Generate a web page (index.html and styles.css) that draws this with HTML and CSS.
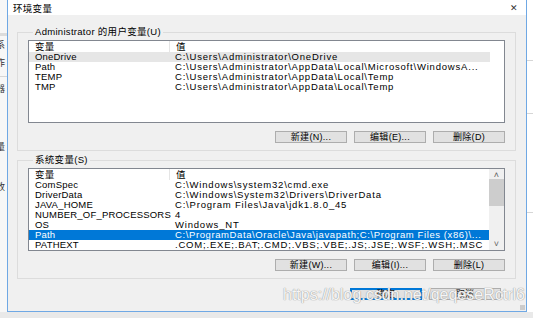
FILE: index.html
```
<!DOCTYPE html>
<html lang="zh-CN">
<head>
    <meta charset="UTF-8">
    <meta name="viewport" content="width=device-width, initial-scale=1.0">
    <title>环境变量</title>
    <link rel="stylesheet" href="styles.css">
</head>
<body>
    <div class="desk">
        <div class="side side-left">
            <div class="band"></div>
            <span class="peek p1">系</span>
            <span class="peek p2">作</span>
            <div class="line"></div>
            <span class="peek p3">器</span>
            <span class="peek p4">量</span>
            <span class="peek p5">改</span>
        </div>

        <div class="dialog">
            <div class="titlebar">
                <span class="title">环境变量</span>
                <span class="close">&#x2715;</span>
            </div>

            <div class="content">
                <fieldset class="group">
                    <legend>Administrator 的用户变量(U)</legend>
                    <div class="list">
                        <div class="row head"><span class="c1">变量</span><span class="c2">值</span></div>
                        <div class="row soft"><span class="c1">OneDrive</span><span class="c2">C:\Users\Administrator\OneDrive</span></div>
                        <div class="row"><span class="c1">Path</span><span class="c2">C:\Users\Administrator\AppData\Local\Microsoft\WindowsA...</span></div>
                        <div class="row"><span class="c1">TEMP</span><span class="c2">C:\Users\Administrator\AppData\Local\Temp</span></div>
                        <div class="row"><span class="c1">TMP</span><span class="c2">C:\Users\Administrator\AppData\Local\Temp</span></div>
                    </div>
                    <div class="btns">
                        <button class="btn">新建(N)...</button>
                        <button class="btn">编辑(E)...</button>
                        <button class="btn">删除(D)</button>
                    </div>
                </fieldset>

                <fieldset class="group">
                    <legend>系统变量(S)</legend>
                    <div class="list scrolled">
                        <div class="rows">
                            <div class="row head"><span class="c1">变量</span><span class="c2">值</span></div>
                            <div class="row"><span class="c1">ComSpec</span><span class="c2">C:\Windows\system32\cmd.exe</span></div>
                            <div class="row"><span class="c1">DriverData</span><span class="c2">C:\Windows\System32\Drivers\DriverData</span></div>
                            <div class="row"><span class="c1">JAVA_HOME</span><span class="c2">C:\Program Files\Java\jdk1.8.0_45</span></div>
                            <div class="row"><span class="c1">NUMBER_OF_PROCESSORS</span><span class="c2">4</span></div>
                            <div class="row"><span class="c1">OS</span><span class="c2">Windows_NT</span></div>
                            <div class="row sel"><span class="c1">Path</span><span class="c2 tight">C:\ProgramData\Oracle\Java\javapath;C:\Program Files (x86)\...</span></div>
                            <div class="row"><span class="c1">PATHEXT</span><span class="c2">.COM;.EXE;.BAT;.CMD;.VBS;.VBE;.JS;.JSE;.WSF;.WSH;.MSC</span></div>
                        </div>
                        <div class="scrollbar">
                            <span class="arrow">&#x2C4;</span>
                            <div class="thumb"></div>
                            <span class="arrow down">&#x2C5;</span>
                        </div>
                    </div>
                    <div class="btns">
                        <button class="btn">新建(W)...</button>
                        <button class="btn">编辑(I)...</button>
                        <button class="btn">删除(L)</button>
                    </div>
                </fieldset>

                <div class="footer">
                    <button class="btn default">确定</button>
                    <button class="btn">取消</button>
                </div>
            </div>

            <div class="watermark">https://blog.csdn.net/qeqeseRctrl6</div>
            <div class="grip"></div>
        </div>

        <div class="side side-right">
            <div class="line l1"></div>
            <div class="line l2"></div>
            <div class="line l3"></div>
        </div>
    </div>
</body>
</html>
```

FILE: styles.css
```
body {
    margin: 0;
    background-color: #e9e9e9;
    font-family: "Liberation Sans", "Noto Sans CJK SC", sans-serif;
    font-size: 9.5px;
    color: #000000;
}
.desk {
    display: flex;
    height: 318px;
    overflow: hidden;
}
.side {
    position: relative;
    width: 7px;
    height: 312px;
    background-color: #f7f7f7;
    overflow: hidden;
}
.side-right {
    width: 6px;
    background-color: #ffffff;
}
.band {
    height: 3px;
    margin-top: 33px;
    background-color: #dcdcdc;
}
.line {
    height: 1px;
    background-color: #d6d6d6;
    margin-top: 40px;
}
.peek {
    position: absolute;
    left: -4px;
    font-size: 9px;
    color: #333333;
}
.p1 { top: 38px; }
.p2 { top: 56px; }
.p3 { top: 82px; }
.p4 { top: 140px; }
.p5 { top: 180px; }
.side-right .l1 { margin-top: 60px; }
.side-right .l2 { margin-top: 52px; }
.side-right .l3 { margin-top: 98px; }

.dialog {
    position: relative;
    width: 518px;
    height: 311px;
    background-color: #f0f0f0;
    border: 1px solid #6fa8e4;
    border-top: none;
}
.titlebar {
    display: flex;
    justify-content: space-between;
    align-items: center;
    height: 15px;
    padding: 0 8px 0 5px;
    background-color: #ffffff;
    letter-spacing: 0.3px;
}
.close {
    font-size: 9px;
    color: #333333;
}
.content {
    padding: 12px 10px 0 9px;
}
.group {
    margin: 0 0 4px 0;
    padding: 3px 10px 7px 10px;
    border: 1px solid #dcdcdc;
    min-width: 0;
}
.group legend {
    padding: 0 2px;
    margin-left: 5px;
    line-height: 10px;
    height: 10px;
    letter-spacing: 0.3px;
}
.list {
    display: flex;
    height: 81px;
    border: 1px solid #828790;
    background-color: #ffffff;
    overflow: hidden;
}
.list > .row, .rows {
    width: 461px;
}
.list:not(.scrolled) {
    flex-direction: column;
}
.row {
    display: flex;
    height: 10px;
    line-height: 10px;
    white-space: nowrap;
}
.row.head {
    height: 11px;
    line-height: 12px;
}
.c1 {
    width: 134px;
    padding-left: 6px;
    flex: none;
    letter-spacing: 0.2px;
}
.c2 {
    padding-left: 6px;
    overflow: hidden;
    letter-spacing: 0.8px;
}
.c2.tight {
    letter-spacing: 0.6px;
}
.head .c1 {
    border-right: 1px solid #e5e5e5;
}
.row.soft {
    background-color: #e6e6e6;
}
.row.sel {
    background-color: #0078d7;
    color: #ffffff;
}
.scrollbar {
    display: flex;
    flex-direction: column;
    align-items: center;
    width: 15px;
    margin-left: auto;
    background-color: #f0f0f0;
}
.arrow {
    height: 10px;
    line-height: 12px;
    font-size: 9px;
    color: #606060;
}
.arrow.down {
    margin-top: auto;
    line-height: 8px;
}
.thumb {
    width: 15px;
    height: 27px;
    background-color: #cdcdcd;
}
.btns, .footer {
    display: flex;
    justify-content: flex-end;
    gap: 7px;
    margin-top: 8px;
}
.footer {
    margin-top: 9px;
    padding-right: 15px;
}
.btn {
    width: 72px;
    height: 12px;
    padding: 0;
    font-family: inherit;
    font-size: 9px;
    line-height: 10px;
    letter-spacing: 0.3px;
    color: #000000;
    background-color: #e1e1e1;
    border: 1px solid #adadad;
    border-radius: 0;
}
.btn.default {
    border-color: #0078d7;
    box-shadow: inset 0 0 0 1px #0078d7;
}
.watermark {
    position: absolute;
    left: 275px;
    top: 286px;
    font-size: 16px;
    color: rgba(255, 255, 255, 0.92);
    text-shadow: 0 0 1px #9a9a9a, 0 0 1px #9a9a9a;
    white-space: nowrap;
}
.grip {
    position: absolute;
    right: 1px;
    bottom: 1px;
    width: 5px;
    height: 5px;
    background-image: radial-gradient(#a0a0a0 0.6px, transparent 0.8px);
    background-size: 2px 2px;
}
```
